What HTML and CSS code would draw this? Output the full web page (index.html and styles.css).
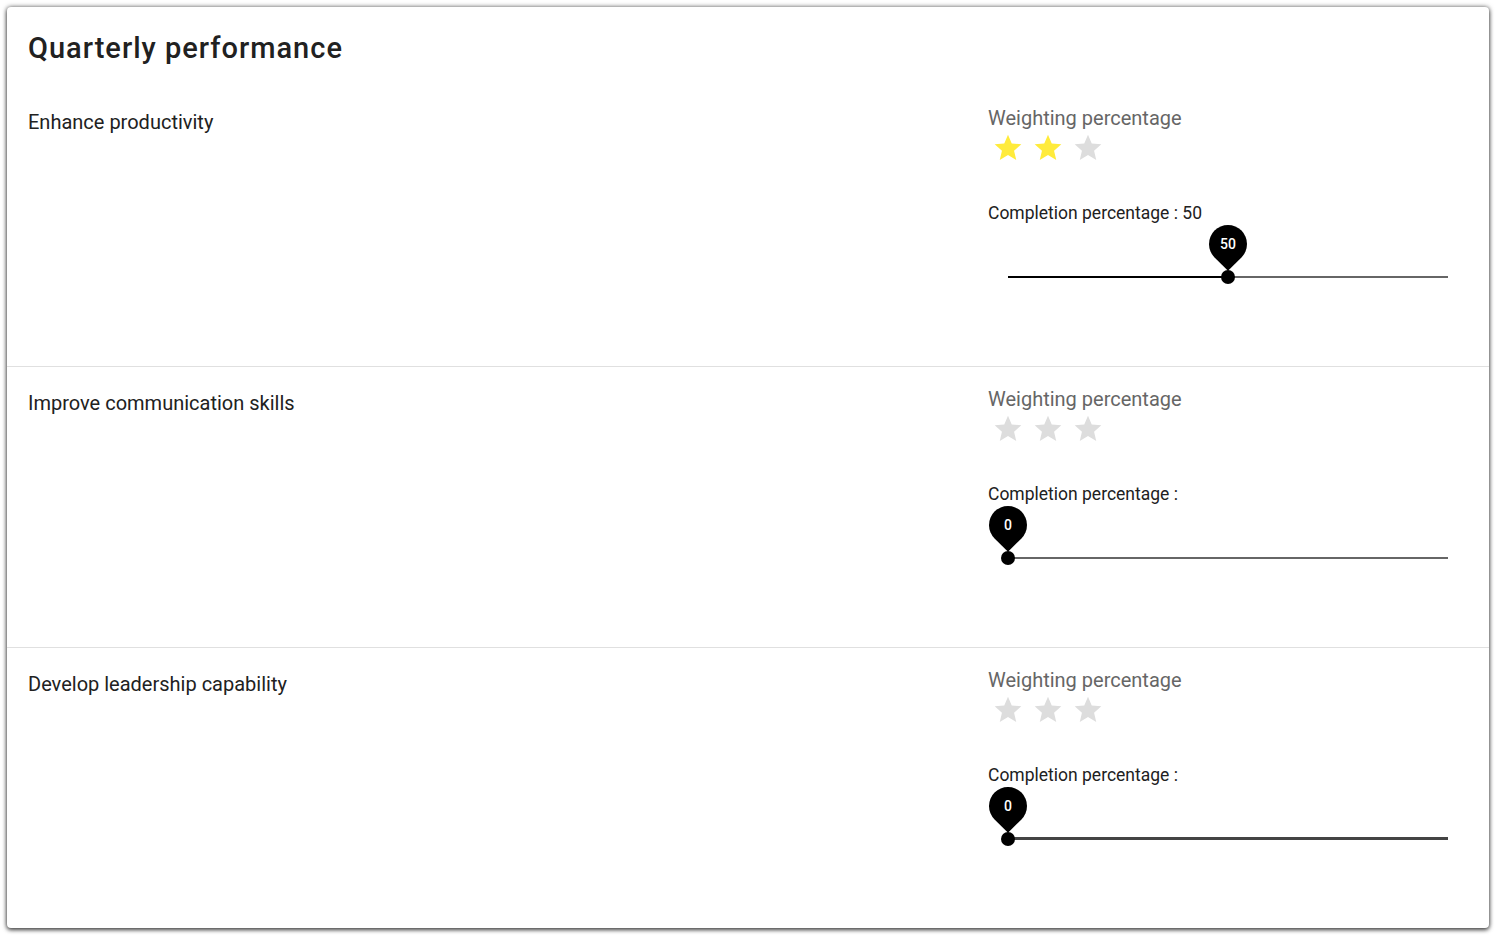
FILE: index.html
```html
<!DOCTYPE html>
<html lang="en">
<head>
    <meta charset="UTF-8">
    <title>Quarterly performance</title>
    <link rel="stylesheet" href="styles.css">
</head>
<body>
    <div class="card">
        <h1 class="card-title">Quarterly performance</h1>

        <div class="goal-row">
            <div class="goal-name">Enhance productivity</div>
            <div class="goal-controls">
                <div class="field-label">Weighting percentage</div>
                <div class="stars">
                    <svg class="star on" viewBox="0 0 24 24"><path d="M12 17.27L18.18 21l-1.64-7.03L22 9.24l-7.19-.61L12 2 9.19 8.63 2 9.24l5.46 4.73L5.82 21z"/></svg>
                    <svg class="star on" viewBox="0 0 24 24"><path d="M12 17.27L18.18 21l-1.64-7.03L22 9.24l-7.19-.61L12 2 9.19 8.63 2 9.24l5.46 4.73L5.82 21z"/></svg>
                    <svg class="star" viewBox="0 0 24 24"><path d="M12 17.27L18.18 21l-1.64-7.03L22 9.24l-7.19-.61L12 2 9.19 8.63 2 9.24l5.46 4.73L5.82 21z"/></svg>
                </div>
                <div class="completion-label">Completion percentage : 50</div>
                <div class="slider">
                    <div class="track">
                        <div class="track-fill" style="width: 50%"></div>
                        <div class="thumb" style="left: 50%">
                            <div class="pin"><span>50</span></div>
                        </div>
                    </div>
                </div>
            </div>
        </div>

        <div class="goal-row">
            <div class="goal-name">Improve communication skills</div>
            <div class="goal-controls">
                <div class="field-label">Weighting percentage</div>
                <div class="stars">
                    <svg class="star" viewBox="0 0 24 24"><path d="M12 17.27L18.18 21l-1.64-7.03L22 9.24l-7.19-.61L12 2 9.19 8.63 2 9.24l5.46 4.73L5.82 21z"/></svg>
                    <svg class="star" viewBox="0 0 24 24"><path d="M12 17.27L18.18 21l-1.64-7.03L22 9.24l-7.19-.61L12 2 9.19 8.63 2 9.24l5.46 4.73L5.82 21z"/></svg>
                    <svg class="star" viewBox="0 0 24 24"><path d="M12 17.27L18.18 21l-1.64-7.03L22 9.24l-7.19-.61L12 2 9.19 8.63 2 9.24l5.46 4.73L5.82 21z"/></svg>
                </div>
                <div class="completion-label">Completion percentage : </div>
                <div class="slider">
                    <div class="track">
                        <div class="track-fill" style="width: 0%"></div>
                        <div class="thumb" style="left: 0%">
                            <div class="pin"><span>0</span></div>
                        </div>
                    </div>
                </div>
            </div>
        </div>

        <div class="goal-row">
            <div class="goal-name">Develop leadership capability</div>
            <div class="goal-controls">
                <div class="field-label">Weighting percentage</div>
                <div class="stars">
                    <svg class="star" viewBox="0 0 24 24"><path d="M12 17.27L18.18 21l-1.64-7.03L22 9.24l-7.19-.61L12 2 9.19 8.63 2 9.24l5.46 4.73L5.82 21z"/></svg>
                    <svg class="star" viewBox="0 0 24 24"><path d="M12 17.27L18.18 21l-1.64-7.03L22 9.24l-7.19-.61L12 2 9.19 8.63 2 9.24l5.46 4.73L5.82 21z"/></svg>
                    <svg class="star" viewBox="0 0 24 24"><path d="M12 17.27L18.18 21l-1.64-7.03L22 9.24l-7.19-.61L12 2 9.19 8.63 2 9.24l5.46 4.73L5.82 21z"/></svg>
                </div>
                <div class="completion-label">Completion percentage : </div>
                <div class="slider">
                    <div class="track dark">
                        <div class="track-fill" style="width: 0%"></div>
                        <div class="thumb" style="left: 0%">
                            <div class="pin"><span>0</span></div>
                        </div>
                    </div>
                </div>
            </div>
        </div>
    </div>
</body>
</html>
```

FILE: styles.css
```css
/* Basic setup */
* {
    margin: 0;
    padding: 0;
    box-sizing: border-box;
}

html, body {
    height: 100%;
    overflow: hidden;
}

body {
    padding: 7px 8px 8px 7px;
    background-color: #ffffff;
    font-family: Roboto, 'Liberation Sans', sans-serif;
    color: #212121;
}

/* Card wrapper */
.card {
    width: 1482px;
    height: 921px;
    background-color: #ffffff;
    border-radius: 4px;
    box-shadow: 0 2px 4px rgba(0, 0, 0, 0.6), 0 0 5px rgba(0, 0, 0, 0.55);
    display: flex;
    flex-direction: column;
}

.card-title {
    height: 79px;
    padding: 24px 21px 0;
    font-size: 29px;
    line-height: 34px;
    font-weight: 500;
    letter-spacing: 1px;
    color: #212121;
}

/* One goal per row */
.goal-row {
    height: 281px;
    display: flex;
    border-bottom: 1px solid #e0e0e0;
}

.goal-row:last-child {
    height: 280px;
    border-bottom: none;
}

.goal-name {
    flex: 1;
    padding: 24px 0 0 21px;
    font-size: 20px;
    line-height: 24px;
    color: #212121;
}

.goal-controls {
    width: 480px;
    margin-right: 21px;
    padding-top: 20px;
}

.field-label {
    font-size: 20px;
    line-height: 24px;
    color: #666666;
}

/* Rating stars */
.stars {
    display: flex;
    gap: 8px;
    margin: 2px 0 0 4px;
    height: 32px;
}

.star {
    width: 32px;
    height: 32px;
    fill: #dddddd;
}

.star.on {
    fill: #ffeb3b;
}

.completion-label {
    margin-top: 38px;
    font-size: 17.5px;
    line-height: 22px;
    color: #212121;
}

/* Slider */
.slider {
    padding: 0 20px;
    margin-top: 52px;
}

.track {
    position: relative;
    height: 2px;
    background-color: #666666;
}

.track.dark {
    height: 3px;
    margin-top: -1px;
    background-color: #444444;
}

.track-fill {
    height: 100%;
    background-color: #000000;
}

.thumb {
    position: absolute;
    top: 50%;
    width: 14px;
    height: 14px;
    margin: -7px 0 0 -7px;
    border-radius: 50%;
    background-color: #000000;
}

.pin {
    position: absolute;
    left: -12px;
    top: -45px;
    width: 38px;
    height: 38px;
    background-color: #000000;
    border-radius: 50% 50% 50% 0;
    transform: rotate(-45deg);
    display: flex;
    align-items: center;
    justify-content: center;
}

.pin span {
    transform: rotate(45deg);
    color: #ffffff;
    font-size: 14px;
    font-weight: 500;
}
```
